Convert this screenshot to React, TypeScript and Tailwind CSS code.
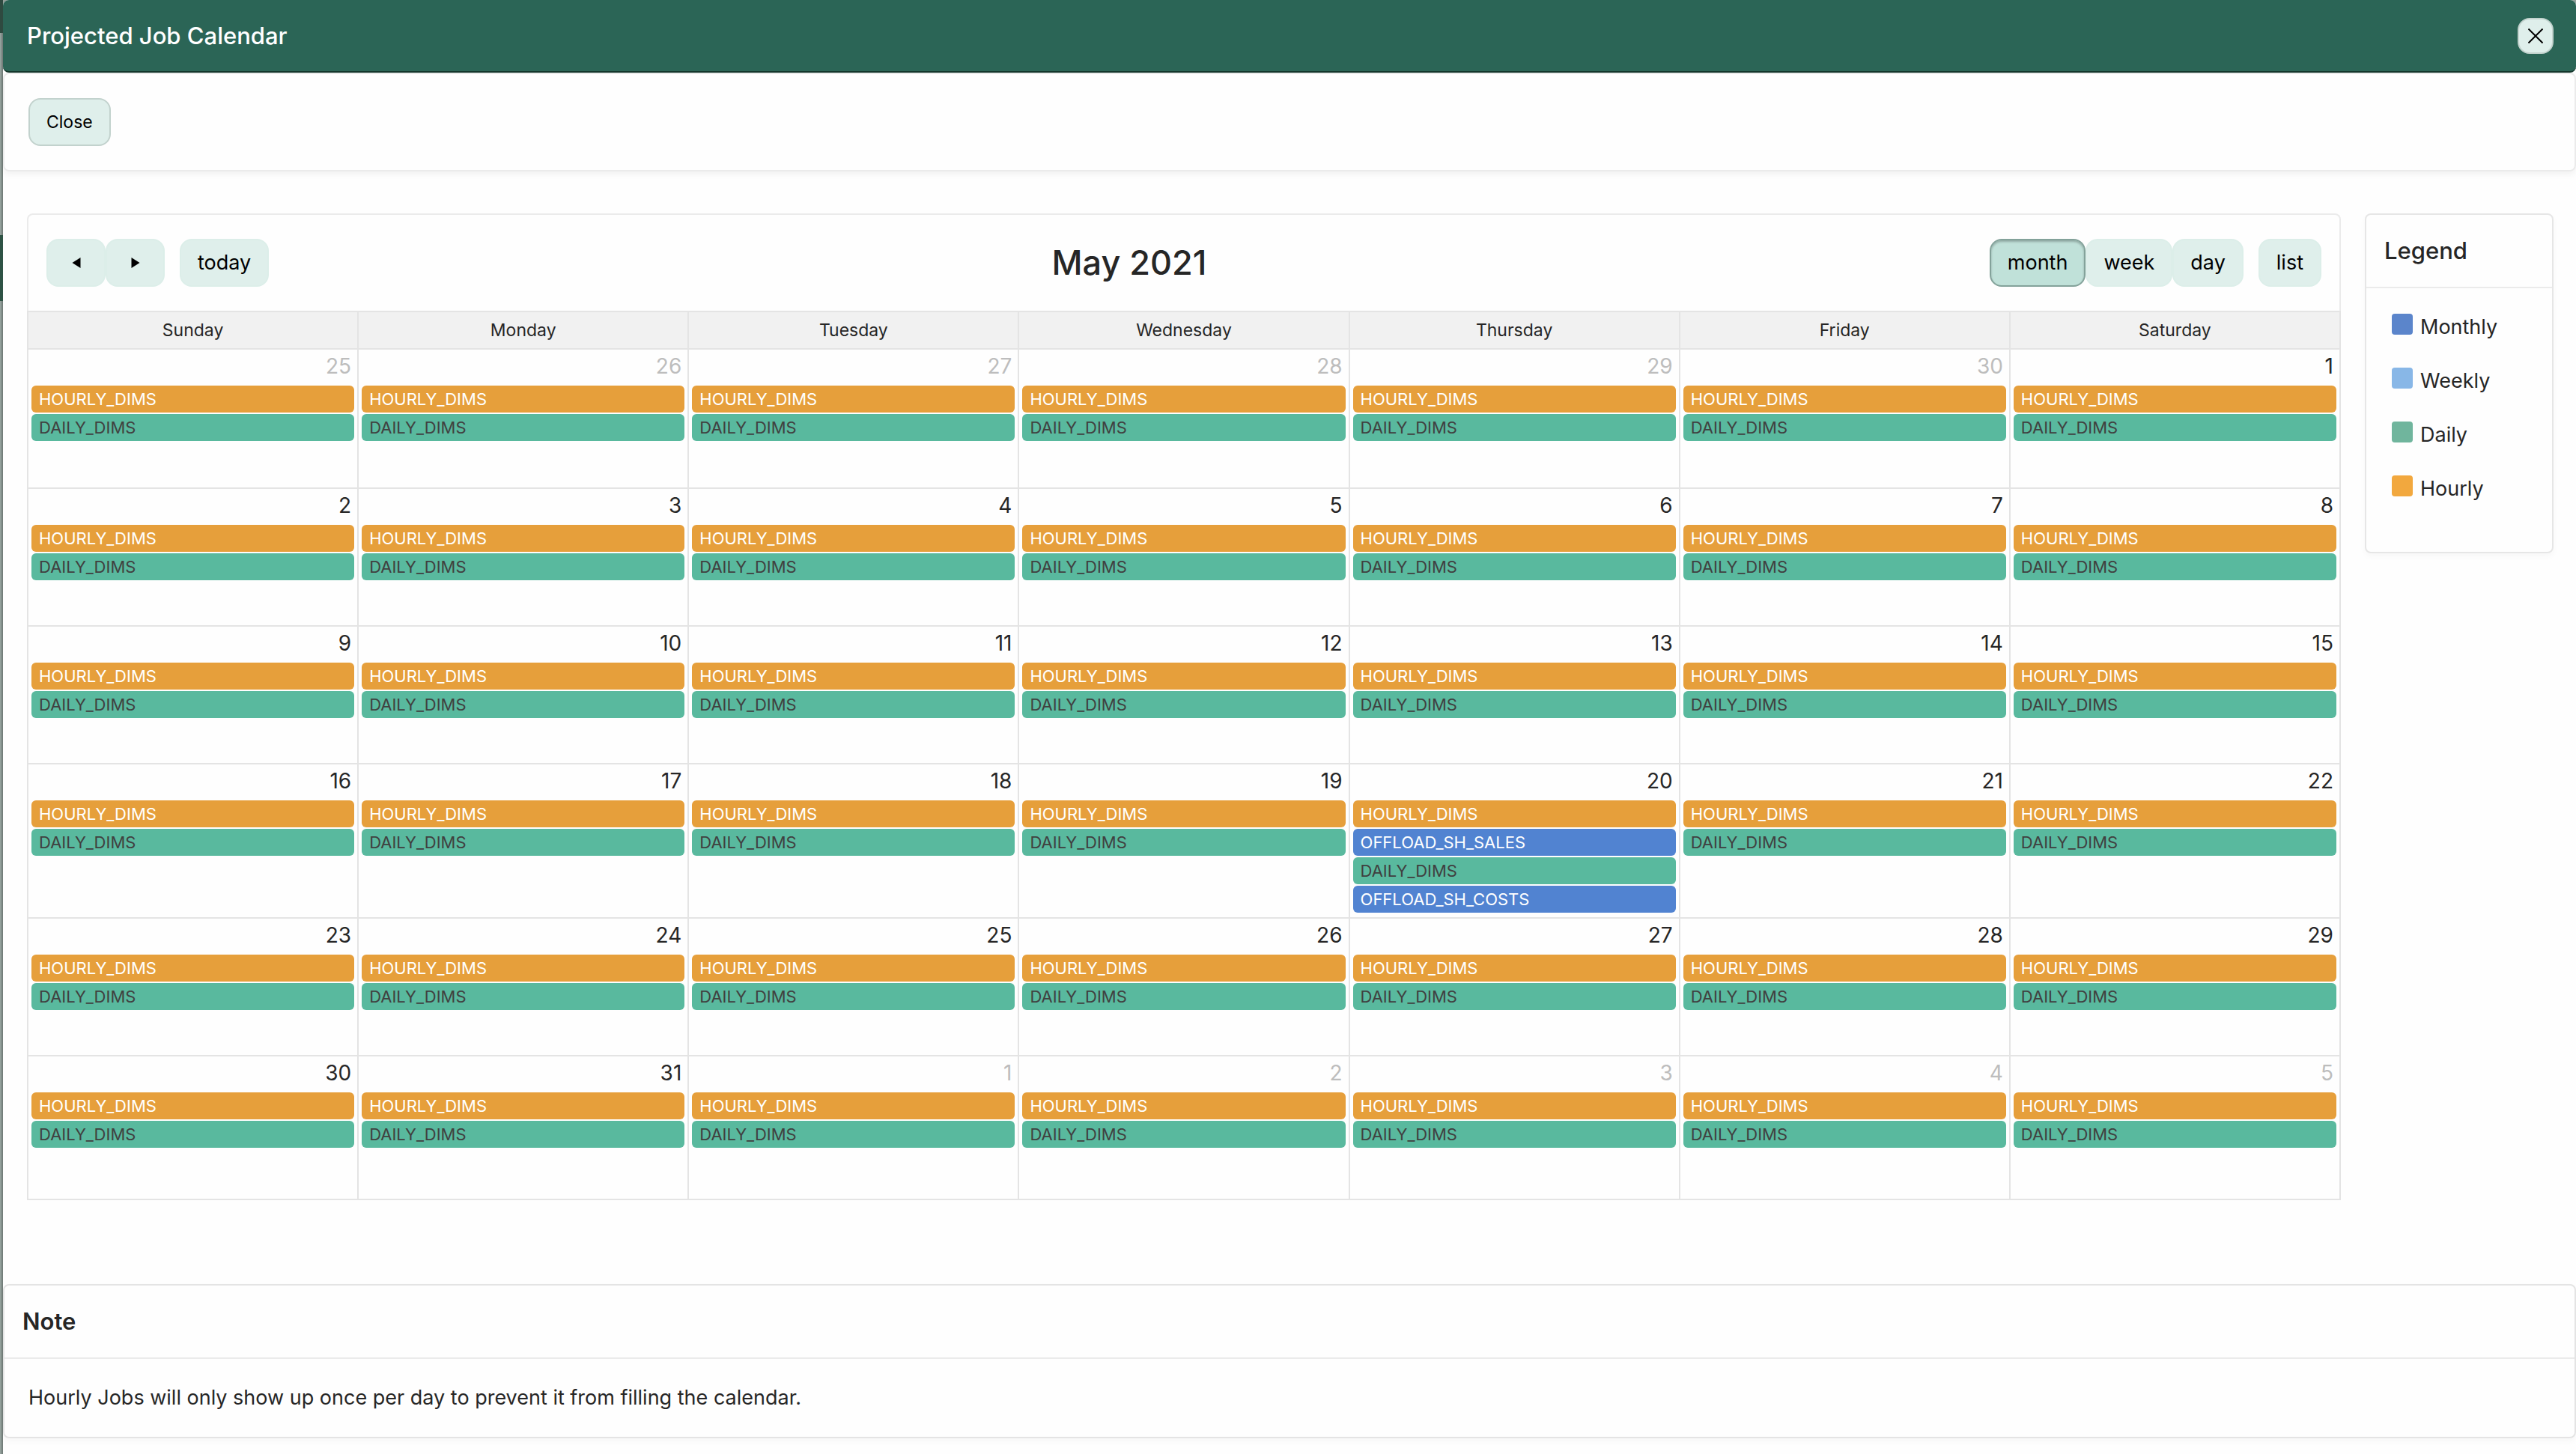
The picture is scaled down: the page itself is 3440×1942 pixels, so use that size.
import React from "react";

type JobKind = "hourly" | "daily" | "monthly";

interface Job {
  name: string;
  kind: JobKind;
}

interface Day {
  number: number;
  outside: boolean;
  jobs: Job[];
}

const WEEKDAYS = ["Sunday", "Monday", "Tuesday", "Wednesday", "Thursday", "Friday", "Saturday"];

const HOURLY: Job = { name: "HOURLY_DIMS", kind: "hourly" };
const DAILY: Job = { name: "DAILY_DIMS", kind: "daily" };

const KIND_CLASS: Record<JobKind, string> = {
  hourly: "bg-[#e69f3b] text-white",
  daily: "bg-[#59b99e] text-[#404040]",
  monthly: "bg-[#5183d1] text-white",
};

const LEGEND = [
  { label: "Monthly", swatch: "bg-[#5b85cb]" },
  { label: "Weekly", swatch: "bg-[#88b7e7]" },
  { label: "Daily", swatch: "bg-[#70b59d]" },
  { label: "Hourly", swatch: "bg-[#f2a83e]" },
];

// Six weeks starting on Sunday, April 25, 2021.
const WEEKS: Day[][] = Array.from({ length: 6 }, (_, week) =>
  Array.from({ length: 7 }, (_, weekday) => {
    const date = new Date(2021, 3, 25 + week * 7 + weekday);
    const outside = date.getMonth() !== 4;
    const number = date.getDate();
    const jobs =
      !outside && number === 20
        ? [
            HOURLY,
            { name: "OFFLOAD_SH_SALES", kind: "monthly" as const },
            DAILY,
            { name: "OFFLOAD_SH_COSTS", kind: "monthly" as const },
          ]
        : [HOURLY, DAILY];
    return { number, outside, jobs };
  }),
);

const ROW_HEIGHT = ["h-[186px]", "h-[184px]", "h-[184px]", "h-[206px]", "h-[184px]", "h-[192px]"];

function CalendarButton({
  children,
  label,
  active = false,
}: {
  children: React.ReactNode;
  label?: string;
  active?: boolean;
}) {
  return (
    <button
      type="button"
      aria-label={label}
      aria-pressed={active}
      className={
        active
          ? "flex h-16 items-center rounded-2xl border-2 border-[#83a29a] bg-[#c0e1d9] px-[22px] text-[27px] text-black shadow-[inset_0_2px_3px_rgba(0,0,0,0.25)]"
          : "flex h-16 items-center rounded-2xl border-2 border-[#dceee9] bg-[#dfefeb] px-[22px] text-[27px] text-black"
      }
    >
      {children}
    </button>
  );
}

function Toolbar() {
  return (
    <div className="flex h-[128px] items-center justify-between px-6">
      <div className="flex items-center gap-5">
        <div className="flex">
          <CalendarButton label="Previous month">
            <span className="flex w-[31px] justify-center">
              <svg viewBox="0 0 12 14" className="h-[14px] w-3" aria-hidden="true">
                <path d="M11.5 0v14L.5 7z" />
              </svg>
            </span>
          </CalendarButton>
          <CalendarButton label="Next month">
            <span className="flex w-[31px] justify-center">
              <svg viewBox="0 0 12 14" className="h-[14px] w-3" aria-hidden="true">
                <path d="M.5 0v14l11-7z" />
              </svg>
            </span>
          </CalendarButton>
        </div>
        <CalendarButton>today</CalendarButton>
      </div>
      <h2 className="text-[45px] font-medium">May 2021</h2>
      <div className="flex items-center gap-5">
        <div className="flex">
          <CalendarButton active>month</CalendarButton>
          <CalendarButton>week</CalendarButton>
          <CalendarButton>day</CalendarButton>
        </div>
        <CalendarButton>list</CalendarButton>
      </div>
    </div>
  );
}

function MonthGrid() {
  return (
    <table className="w-full table-fixed border-collapse">
      <thead>
        <tr className="h-[50px]">
          {WEEKDAYS.map((day) => (
            <th
              key={day}
              scope="col"
              className="border-2 border-[#e4e4e4] bg-[#f1f1f1] p-0 text-[23px] leading-8 font-normal"
            >
              {day}
            </th>
          ))}
        </tr>
      </thead>
      <tbody>
        {WEEKS.map((week, index) => (
          <tr key={index} className={ROW_HEIGHT[index]}>
            {week.map((day, weekday) => (
              <td key={weekday} className="border-2 border-[#e4e4e4] p-0 align-top">
                <div
                  className={
                    day.outside
                      ? "h-12 px-2 pt-0.5 text-right text-[28px] leading-10 text-[#bdbdbd]"
                      : "h-12 px-2 pt-0.5 text-right text-[28px] leading-10"
                  }
                >
                  {day.number}
                </div>
                <div className="flex flex-col gap-0.5 px-1">
                  {day.jobs.map((job) => (
                    <a
                      key={job.name}
                      href="#"
                      className={`block h-9 rounded-md px-2.5 text-[22px] leading-9 ${KIND_CLASS[job.kind]}`}
                    >
                      {job.name}
                    </a>
                  ))}
                </div>
              </td>
            ))}
          </tr>
        ))}
      </tbody>
    </table>
  );
}

function Legend() {
  return (
    <aside className="w-[252px] shrink-0 rounded-lg border-2 border-[#e6e6e6] pb-[60px] shadow-[0_4px_8px_rgba(0,0,0,0.03)]">
      <h2 className="border-b-2 border-[#ebebeb] px-6 py-6 text-[31px] leading-[48px] font-medium">Legend</h2>
      <ul className="flex flex-col gap-6 px-[34px] pt-7">
        {LEGEND.map((item) => (
          <li key={item.label} className="flex h-12 items-start gap-2.5">
            <span className={`mt-1.5 size-7 rounded ${item.swatch}`} />
            <span className="text-[27px] leading-[48px]">{item.label}</span>
          </li>
        ))}
      </ul>
    </aside>
  );
}

export default function App() {
  return (
    <div className="flex min-h-screen bg-[#93a09b] font-['Inter',sans-serif] text-[#262626]">
      <div className="flex w-1 shrink-0 flex-col shadow-[inset_-2px_0_0_#747f7b]">
        <div className="h-11 bg-[#2f4a40]" />
        <div className="mt-[270px] h-[88px] bg-[#2d5244]" />
      </div>
      <div className="min-w-0 flex-1 rounded-t-lg bg-[#fefefe]">
        <header className="flex h-[97px] items-center justify-between rounded-lg border-b-2 border-[#16382d] bg-[#2b6556] pr-[30px] pl-8">
          <h1 className="pt-0.5 text-[31px] font-medium text-white">Projected Job Calendar</h1>
          <button
            type="button"
            aria-label="Close dialog"
            className="flex size-12 items-center justify-center rounded-2xl border-2 border-[#c2d2cd] bg-[#dfefeb]"
          >
            <svg viewBox="0 0 20 20" className="size-5" aria-hidden="true">
              <path d="M.5.5l19 19M19.5.5l-19 19" stroke="black" strokeWidth="2" fill="none" />
            </svg>
          </button>
        </header>
        <div className="rounded-lg border-2 border-[#ebebeb] px-8 py-8 shadow-[0_4px_8px_rgba(0,0,0,0.05)]">
          <button
            type="button"
            className="h-16 rounded-2xl border-2 border-[#c2d2cd] bg-[#dfefeb] px-[22px] text-[23px] text-black"
          >
            Close
          </button>
        </div>
        <main className="flex items-start gap-8 pt-14 pr-[30px] pb-28 pl-8">
          <section className="min-w-0 flex-1">
            <div className="rounded-t-lg border-2 border-b-0 border-[#ebebeb]">
              <Toolbar />
            </div>
            <MonthGrid />
          </section>
          <Legend />
        </main>
        <section className="rounded-lg border-2 border-[#e4e4e4] shadow-[0_4px_8px_rgba(0,0,0,0.03)]">
          <h2 className="border-b-2 border-[#ebebeb] px-6 py-6 text-[31px] leading-[48px] font-semibold">Note</h2>
          <p className="px-8 py-7 text-[27px] leading-[48px]">
            Hourly Jobs will only show up once per day to prevent it from filling the calendar.
          </p>
        </section>
      </div>
    </div>
  );
}
